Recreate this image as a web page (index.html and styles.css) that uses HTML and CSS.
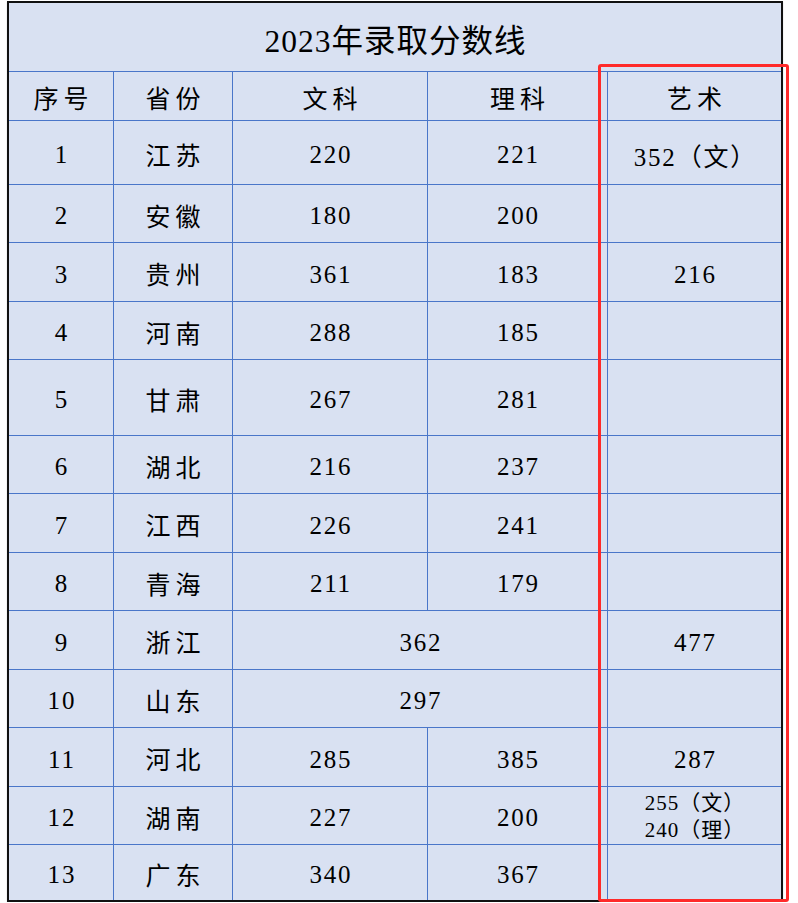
FILE: index.html
```html
<!DOCTYPE html>
<html lang="zh-CN">
<head>
<meta charset="utf-8">
<title>2023年录取分数线</title>
<link rel="stylesheet" href="styles.css">
</head>
<body>
<div class="sheet">
  <div class="cell title">2023年录取分数线</div>

  <div class="cell zh head">序号</div>
  <div class="cell zh head">省份</div>
  <div class="cell zh head">文科</div>
  <div class="cell zh head">理科</div>
  <div class="cell zh head">艺术</div>

  <div class="cell num">1</div><div class="cell zh">江苏</div><div class="cell num">220</div><div class="cell num">221</div><div class="cell num">352（文）</div>
  <div class="cell num">2</div><div class="cell zh">安徽</div><div class="cell num">180</div><div class="cell num">200</div><div class="cell num"></div>
  <div class="cell num">3</div><div class="cell zh">贵州</div><div class="cell num">361</div><div class="cell num">183</div><div class="cell num">216</div>
  <div class="cell num">4</div><div class="cell zh">河南</div><div class="cell num">288</div><div class="cell num">185</div><div class="cell num"></div>
  <div class="cell num">5</div><div class="cell zh">甘肃</div><div class="cell num">267</div><div class="cell num">281</div><div class="cell num"></div>
  <div class="cell num">6</div><div class="cell zh">湖北</div><div class="cell num">216</div><div class="cell num">237</div><div class="cell num"></div>
  <div class="cell num">7</div><div class="cell zh">江西</div><div class="cell num">226</div><div class="cell num">241</div><div class="cell num"></div>
  <div class="cell num">8</div><div class="cell zh">青海</div><div class="cell num">211</div><div class="cell num">179</div><div class="cell num"></div>
  <div class="cell num">9</div><div class="cell zh">浙江</div><div class="cell num span2">362</div><div class="cell num">477</div>
  <div class="cell num">10</div><div class="cell zh">山东</div><div class="cell num span2">297</div><div class="cell num"></div>
  <div class="cell num">11</div><div class="cell zh">河北</div><div class="cell num">285</div><div class="cell num">385</div><div class="cell num">287</div>
  <div class="cell num">12</div><div class="cell zh">湖南</div><div class="cell num">227</div><div class="cell num">200</div><div class="cell num small"><span>255（文）</span><span>240（理）</span></div>
  <div class="cell num">13</div><div class="cell zh">广东</div><div class="cell num">340</div><div class="cell num">367</div><div class="cell num"></div>
</div>
<div class="mark"></div>
</body>
</html>
```

FILE: styles.css
```css
html, body {
  margin: 0;
  padding: 0;
  background: #ffffff;
}

body {
  font-family: "Liberation Serif", "Noto Sans CJK SC", serif;
  color: #000000;
}

.sheet {
  display: grid;
  grid-template-columns: 104px 118px 194px 179px 173px;
  grid-template-rows: 68px 48px 63px 57px 58px 57px 75px 57px 58px 57px 58px 57px 58px 57px 55px;
  gap: 1px;
  width: max-content;
  margin: 1px 0 0 7px;
  background: #4a76c9;
  border: 2px solid #111111;
  box-shadow: 0 1px 1px rgba(0, 0, 0, 0.25);
}

.cell {
  background: #d9e1f2;
  display: flex;
  align-items: center;
  justify-content: center;
  flex-direction: column;
  padding-top: 5px;
  box-sizing: border-box;
  white-space: nowrap;
}

.title {
  grid-column: 1 / -1;
  font-size: 31.5px;
  letter-spacing: 1px;
  padding-left: 1px;
  padding-top: 2px;
}

.zh {
  font-size: 25px;
  letter-spacing: 5px;
  padding-left: 5px;
  padding-top: 2px;
}

.head {
  padding-top: 1px;
}

.num {
  font-size: 25px;
  letter-spacing: 1.8px;
  padding-left: 1.8px;
}

.span2 {
  grid-column: span 2;
}

.small {
  font-size: 21px;
  line-height: 27px;
  letter-spacing: 1px;
  padding-left: 1px;
  padding-top: 2px;
}

.mark {
  position: absolute;
  left: 598px;
  top: 64px;
  width: 191px;
  height: 838px;
  box-sizing: border-box;
  border: 3px solid #ff2a2a;
  border-radius: 3px;
}
```
